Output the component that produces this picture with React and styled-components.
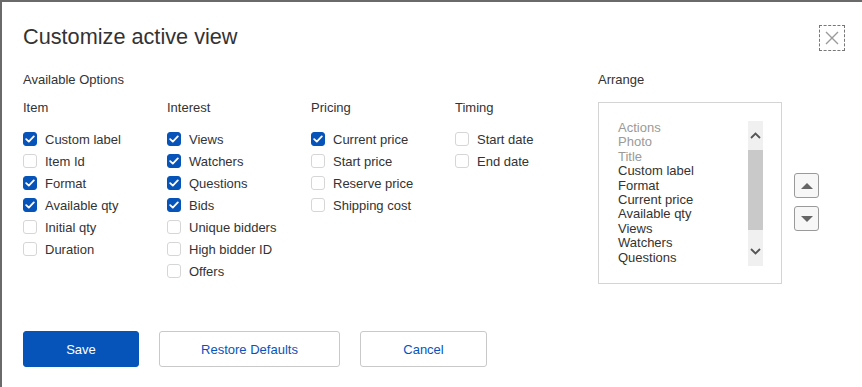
import React from "react";
import styled, { createGlobalStyle } from "styled-components";

const Global = createGlobalStyle`
  html, body { margin: 0; padding: 0; background: #6a6a6a; }
  body { font-family: "Liberation Sans", Arial, sans-serif; color: #333; }
  * { box-sizing: border-box; }
`;

const Dialog = styled.div`
  margin: 2px 0 0 2px;
  width: 860px;
  height: 385px;
  background: #fff;
  padding: 0 21px;
  display: flex;
  flex-direction: column;
`;

const Header = styled.div`
  display: flex;
  justify-content: space-between;
  align-items: center;
  height: 68px;
  padding-top: 1px;
`;

const Title = styled.h1`
  margin: 0;
  font-size: 21.7px;
  font-weight: 400;
  color: #333;
`;

const Close = styled.button`
  width: 26px;
  height: 26px;
  margin-right: -4px;
  margin-top: 3px;
  border: 1px dashed #777;
  background: #fff;
  padding: 0;
  display: flex;
  align-items: center;
  justify-content: center;
`;

const Body = styled.div`
  display: flex;
  height: 213px;
`;

const Options = styled.div`
  width: 575px;
`;

const SectionLabel = styled.div`
  font-size: 13px;
  height: 20px;
  line-height: 20px;
`;

const Columns = styled.div`
  display: grid;
  grid-template-columns: repeat(4, 144px);
  margin-top: 8px;
`;

const ColHead = styled.div`
  font-size: 13px;
  height: 20px;
  line-height: 20px;
  margin-bottom: 10px;
`;

const Row = styled.label`
  display: flex;
  align-items: center;
  height: 22px;
  font-size: 13px;
  color: #333;
`;

const Box = styled.span`
  width: 14px;
  height: 14px;
  border-radius: 3px;
  margin-right: 8px;
  display: inline-flex;
  align-items: center;
  justify-content: center;
  background: ${(p) => (p.$on ? "#0654ba" : "#fff")};
  border: 1px solid ${(p) => (p.$on ? "#0654ba" : "#d6d6d6")};
`;

const Arrange = styled.div`
  display: flex;
  flex-direction: column;
`;

const ArrangeRow = styled.div`
  display: flex;
  align-items: flex-start;
  margin-top: 12px;
`;

const ListBox = styled.div`
  width: 184px;
  height: 182px;
  border: 1px solid #d4d4d4;
  display: flex;
  padding: 18px 18px 17px 19px;
  justify-content: space-between;
`;

const List = styled.ul`
  list-style: none;
  margin: 0;
  padding: 0;
  font-size: 13px;
  line-height: 14.4px;
`;

const Item = styled.li`
  color: ${(p) => (p.$muted ? "#9a9a9a" : "#333")};
`;

const Scroll = styled.div`
  width: 15px;
  background: #f0f0f0;
  display: flex;
  flex-direction: column;
  align-items: center;
`;

const ScrollArrow = styled.div`
  height: 29px;
  display: flex;
  align-items: center;
  justify-content: center;
`;

const Thumb = styled.div`
  width: 15px;
  height: 80px;
  background: #c9c9c9;
`;

const Spacer = styled.div`
  flex: 1;
`;

const MoveButtons = styled.div`
  display: flex;
  flex-direction: column;
  gap: 8px;
  margin-left: 12px;
  margin-top: 71px;
`;

const MoveBtn = styled.button`
  width: 25px;
  height: 25px;
  border: 1px solid #9a9a9a;
  border-radius: 3px;
  background: #f7f7f7;
  padding: 0;
  display: flex;
  align-items: center;
  justify-content: center;
`;

const Footer = styled.div`
  display: flex;
  gap: 20px;
  margin-top: 48px;
`;

const Button = styled.button`
  height: 36px;
  width: ${(p) => p.$w}px;
  border-radius: 3px;
  font-family: "Liberation Sans", Arial, sans-serif;
  font-size: 13px;
  cursor: pointer;
  border: 1px solid ${(p) => (p.$primary ? "#0654ba" : "#c9c9c9")};
  background: ${(p) => (p.$primary ? "#0654ba" : "#fff")};
  color: ${(p) => (p.$primary ? "#fff" : "#0654ba")};
`;

const Check = () => (
  <svg width="10" height="8" viewBox="0 0 10 8">
    <path d="M1.2 4.2 L3.8 6.6 L8.8 1.4" fill="none" stroke="#fff" strokeWidth="1.8" strokeLinecap="round" strokeLinejoin="round" />
  </svg>
);

const columns = [
  { title: "Item", items: [["Custom label", 1], ["Item Id", 0], ["Format", 1], ["Available qty", 1], ["Initial qty", 0], ["Duration", 0]] },
  { title: "Interest", items: [["Views", 1], ["Watchers", 1], ["Questions", 1], ["Bids", 1], ["Unique bidders", 0], ["High bidder ID", 0], ["Offers", 0]] },
  { title: "Pricing", items: [["Current price", 1], ["Start price", 0], ["Reserve price", 0], ["Shipping cost", 0]] },
  { title: "Timing", items: [["Start date", 0], ["End date", 0]] },
];

const arranged = [
  ["Actions", 1], ["Photo", 1], ["Title", 1], ["Custom label"], ["Format"], ["Current price"],
  ["Available qty"], ["Views"], ["Watchers"], ["Questions"],
];

export default function App() {
  return (
    <>
      <Global />
      <Dialog>
        <Header>
          <Title>Customize active view</Title>
          <Close aria-label="Close">
            <svg width="16" height="16" viewBox="0 0 16 16">
              <path d="M2 2 L14 14 M14 2 L2 14" stroke="#9a9a9a" strokeWidth="1.4" />
            </svg>
          </Close>
        </Header>
        <Body>
          <Options>
            <SectionLabel>Available Options</SectionLabel>
            <Columns>
              {columns.map((c) => (
                <div key={c.title}>
                  <ColHead>{c.title}</ColHead>
                  {c.items.map(([label, on]) => (
                    <Row key={label}>
                      <Box $on={!!on}>{on ? <Check /> : null}</Box>
                      {label}
                    </Row>
                  ))}
                </div>
              ))}
            </Columns>
          </Options>
          <Arrange>
            <SectionLabel>Arrange</SectionLabel>
            <ArrangeRow>
              <ListBox>
                <List>
                  {arranged.map(([t, m]) => (
                    <Item key={t} $muted={!!m}>{t}</Item>
                  ))}
                </List>
                <Scroll>
                  <ScrollArrow>
                    <svg width="11" height="7" viewBox="0 0 11 7">
                      <path d="M1 6 L5.5 1.5 L10 6" fill="none" stroke="#555" strokeWidth="1.8" />
                    </svg>
                  </ScrollArrow>
                  <Thumb />
                  <Spacer />
                  <ScrollArrow>
                    <svg width="11" height="7" viewBox="0 0 11 7">
                      <path d="M1 1 L5.5 5.5 L10 1" fill="none" stroke="#555" strokeWidth="1.8" />
                    </svg>
                  </ScrollArrow>
                </Scroll>
              </ListBox>
              <MoveButtons>
                <MoveBtn aria-label="Move up">
                  <svg width="12" height="6" viewBox="0 0 12 6"><path d="M0 6 L6 0 L12 6 Z" fill="#666" /></svg>
                </MoveBtn>
                <MoveBtn aria-label="Move down">
                  <svg width="12" height="6" viewBox="0 0 12 6"><path d="M0 0 L6 6 L12 0 Z" fill="#666" /></svg>
                </MoveBtn>
              </MoveButtons>
            </ArrangeRow>
          </Arrange>
        </Body>
        <Footer>
          <Button $primary $w={116}>Save</Button>
          <Button $w={181}>Restore Defaults</Button>
          <Button $w={127}>Cancel</Button>
        </Footer>
      </Dialog>
    </>
  );
}
